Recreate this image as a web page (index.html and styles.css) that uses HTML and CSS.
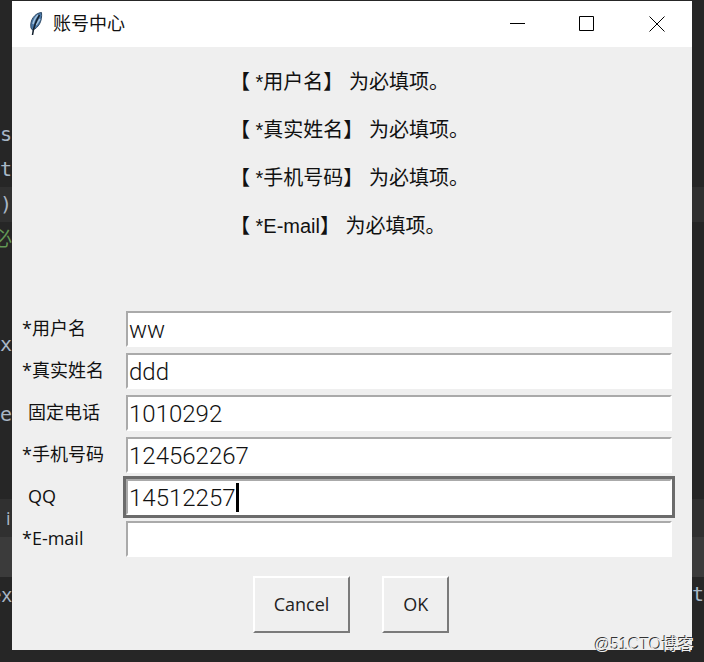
FILE: index.html
```
<!DOCTYPE html>
<html lang="zh-CN">
<head>
  <meta charset="UTF-8" />
  <meta name="viewport" content="width=device-width, initial-scale=1" />
  <title>账号中心</title>
  <link rel="stylesheet" href="styles.css">
</head>
<body>

<div class="desktop">
  <div class="editor" aria-hidden="true">
    <div class="code">
      <div class="line"><span>s</span></div>
      <div class="line"><span>t</span></div>
      <div class="line current"><span>)</span></div>
      <div class="line comment"><span>必</span></div>
      <div class="line"></div>
      <div class="line"></div>
      <div class="line"><span>x</span></div>
      <div class="line"></div>
      <div class="line"><span>e</span></div>
    </div>
    <div class="crumbs"><span>i</span></div>
    <div class="toolbar"></div>
    <div class="line"><span class="console">ex</span><span>t</span></div>
  </div>

  <main class="window">
    <header class="titlebar">
      <svg class="feather" width="16" height="26" viewBox="0 0 16 26">
        <path d="M13.5 1.5C7 2 1.5 9 3 17l1.500 2C10.5 17 14.5 10 13.5 1.5z" fill="#4a78a8" stroke="#2c4763" stroke-width="1"/>
        <path d="M10 4C7.5 6 6 9 5 13M12 8l-4 6" fill="none" stroke="#a5c4de" stroke-width="1.5"/>
        <path d="M11.5 4C8 10 5.5 15 4.5 24" fill="none" stroke="#16222f" stroke-width="1.5"/>
      </svg>
      <h1>账号中心</h1>
      <div class="window-buttons">
        <button type="button" aria-label="最小化"><svg width="16" height="16" viewBox="0 0 16 16"><path d="M1 7.5h15"/></svg></button>
        <button type="button" aria-label="最大化"><svg width="16" height="16" viewBox="0 0 16 16"><path d="M.5.5h14v14H.5z"/></svg></button>
        <button type="button" aria-label="关闭"><svg width="16" height="16" viewBox="0 0 16 16"><path d="M.5.5l15 15M15.5.5l-15 15"/></svg></button>
      </div>
    </header>

    <form class="account" onsubmit="return false">
      <div class="messages">
        <p>【 *用户名】 为必填项。</p>
        <p>【 *真实姓名】 为必填项。</p>
        <p>【 *手机号码】 为必填项。</p>
        <p>【 *E-mail】 为必填项。</p>
      </div>

      <div class="fields">
        <label for="username">*用户名</label>
        <input type="text" id="username" value="ww" />
        <label for="realname">*真实姓名</label>
        <input type="text" id="realname" value="ddd" />
        <label for="phone" class="optional">固定电话</label>
        <input type="text" id="phone" value="1010292" />
        <label for="mobile">*手机号码</label>
        <input type="text" id="mobile" value="124562267" />
        <label for="qq" class="optional">QQ</label>
        <div class="active-field">
          <input type="text" id="qq" value="14512257" />
          <span class="caret"></span>
        </div>
        <label for="email">*E-mail</label>
        <input type="text" id="email" value="" />
      </div>

      <div class="actions">
        <button type="button">Cancel</button>
        <button type="submit">OK</button>
      </div>
    </form>
  </main>

  <div class="watermark">@51CTO博客</div>
</div>

</body>
</html>
```

FILE: styles.css
```
* {
  box-sizing: border-box;
}
body {
  margin: 0;
  background: #262626;
  font-family: "Open Sans", "Noto Sans CJK SC", sans-serif;
  color: #111;
}
.desktop {
  position: relative;
  display: grid;
  min-height: 100vh;
}
.editor, .window {
  grid-area: 1 / 1;
}

/* editor behind the dialog */
.editor {
  padding-top: 117px;
  color: #a9b7c6;
  font-family: "DejaVu Sans Mono", "Noto Sans CJK SC", monospace;
  font-size: 20px;
  overflow: hidden;
}
.line {
  display: flex;
  justify-content: space-between;
  height: 35px;
  line-height: 35px;
}
.line span {
  display: flex;
  justify-content: flex-end;
  width: 12px;
  overflow: hidden;
}
.current {
  background: #303030;
}
.comment {
  color: #629755;
}
.console {
  font-family: "Open Sans", sans-serif;
}
.code {
  padding-bottom: 67px;
}
.crumbs {
  height: 38px;
  padding-left: 6px;
  background: #303030;
  font-family: "Open Sans", sans-serif;
  font-size: 18px;
  line-height: 38px;
}
.toolbar {
  height: 40px;
  background: #3b3b3b;
}

/* dialog */
.window {
  z-index: 1;
  margin: 1px 12px 12px;
  background: #efefef;
}
.titlebar {
  display: flex;
  align-items: center;
  height: 46px;
  padding-left: 16px;
  background: #fff;
}
.titlebar h1 {
  margin: 0 auto 0 9px;
  font-size: 18px;
  font-weight: 400;
  line-height: 24px;
  padding-bottom: 2px;
}
.window-buttons {
  display: flex;
}
.window-buttons button {
  display: flex;
  align-items: center;
  justify-content: center;
  width: 70px;
  height: 46px;
  padding: 0;
  border: none;
  background: none;
}
.window-buttons svg {
  fill: none;
  stroke: #000;
}

.messages {
  width: 244px;
  margin: 0 auto;
  padding-top: 11px;
  font-family: "Liberation Sans", "Noto Sans CJK SC", sans-serif;
  font-size: 20px;
  line-height: 48px;
  white-space: nowrap;
}
.messages p {
  margin: 0;
}

.fields {
  display: grid;
  grid-template-columns: 104px 1fr;
  row-gap: 6px;
  padding: 61px 20px 0 10px;
}
.fields label {
  font-size: 18px;
  line-height: 34px;
}
.fields .optional {
  padding-left: 6px;
}
.fields input {
  width: 100%;
  height: 36px;
  padding: 1px 1px 0;
  border: 2px solid #fff;
  border-top-color: #aaa;
  border-left-color: #aaa;
  background: #fff;
  font-family: Roboto, "Noto Sans CJK SC", sans-serif;
  font-size: 24px;
  font-weight: 300;
  color: #111;
  outline: none;
}
.active-field {
  position: relative;
  outline: 3px solid #6b6b6b;
}
.caret {
  position: absolute;
  top: 4px;
  left: 110px;
  width: 3px;
  height: 29px;
  background: #000;
}

.actions {
  display: flex;
  justify-content: center;
  gap: 32px;
  padding: 19px 2px 17px 0;
}
.actions button {
  height: 57px;
  padding: 0 19px 2px;
  border: 2px solid;
  border-color: #fff #7a7a7a #7a7a7a #fff;
  background: #efefef;
  font-family: inherit;
  font-size: 18px;
  color: #222;
}

.watermark {
  position: absolute;
  right: 10px;
  bottom: 6px;
  z-index: 2;
  color: #eee;
  font-family: "Liberation Sans", "Noto Sans CJK SC", sans-serif;
  font-size: 16px;
  line-height: 22px;
  text-shadow: -1px -1px 0 #333;
}
```
